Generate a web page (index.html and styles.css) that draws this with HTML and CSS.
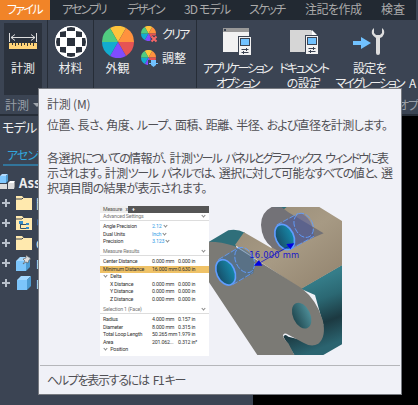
FILE: index.html
```html
<!DOCTYPE html>
<html>
<head>
<meta charset="utf-8">
<title>計測</title>
<link rel="stylesheet" href="styles.css">
</head>
<body>
<svg width="0" height="0" class="defs">
  <defs>
    <symbol id="wheel" viewBox="-16 -16 32 32">
      <path fill="#ffc33c" d="M0 0L-8-13.9A16 16 0 0 1 8-13.9Z"/>
      <path fill="#ff923e" d="M0 0L8-13.9A16 16 0 0 1 16 0Z"/>
      <path fill="#e65454" d="M0 0H16A16 16 0 0 1 8 13.9Z"/>
      <path fill="#804cff" d="M0 0L8 13.9A16 16 0 0 1-8 13.9Z"/>
      <path fill="#12acd0" d="M0 0L-8 13.9A16 16 0 0 1-16 0Z"/>
      <path fill="#50cc80" d="M0 0H-16A16 16 0 0 1-8-13.9Z"/>
    </symbol>
    <symbol id="folder" viewBox="0 0 16 14"><path fill="#ffe9ae" d="M0 0h6l2 2h8v12H0z"/><path d="M0 3h6l1.500-1.500" fill="none" stroke="#3b4453"/></symbol>
    <symbol id="cube" viewBox="0 0 14 14"><path fill="#7cc5fb" d="M0 4H10V14H0z"/><path fill="#a3d8ff" d="M0 4L4 0H14L10 4z"/><path fill="#4c9bd2" d="M10 4L14 0V10L10 14z"/></symbol>
    <symbol id="sheet" viewBox="0 0 14 20"><path fill="#3b4453" d="M0 0h14v20H0z"/><path fill="#f2f2f2" d="M1 1h12v18H1z"/><path fill="#3b4453" d="M2 2h10v8H2z"/><path fill="#71c2ff" d="M3 3h8v6H3z"/><path d="M3.500 13.500h7M3.500 16.500h7M8.500 12v3M5.500 15v3" stroke="#3b4453"/></symbol>
  </defs>
</svg>
<nav class="tabs">
  <span class="tab file">ファイル</span>
  <span class="tab assy">アセンブリ</span>
  <span class="tab design">デザイン</span>
  <span class="tab model">3D モデル</span>
  <span class="tab sketch">スケッチ</span>
  <span class="tab note">注記を作成</span>
  <span class="tab check">検査</span>
</nav>
<section class="ribbon">
  <div class="tool pressed">
    <svg class="icon" width="30" height="32" viewBox="0 0 30 32"><path d="M1.500 7v9M28.500 7v9M3 11.500h24M7 8.500l-4 3 4 3M23 8.500l4 3-4 3" fill="none" stroke="#ddd"/><path fill="#ffd479" d="M1 17h28v6H1z"/><path d="M4.500 17v2M7.500 17v3M10.500 17v2M13.500 17v3M16.500 17v2M19.500 17v3M22.500 17v2M25.500 17v3" stroke="#3b3a35"/></svg>
    <span class="label">計測</span>
  </div>
  <div class="tool material">
    <svg class="icon" width="32" height="32" viewBox="-16 -16 32 32"><circle r="16" fill="#fff"/><g fill="#2b323d"><path d="M-4-4h8v8h-8zM-4-15h8v4h-8zM-4 11h8v4h-8zM-15-4h4v8h-4zM11-4h4v8h-4zM-11-10l6-1v6h-6zM5-11l6 1v5H5zM-11 5h6v6l-6-1zM5 5h6v5l-6 1z"/></g><circle r="15.500" fill="none" stroke="#fff"/></svg>
    <span class="label">材料</span>
  </div>
  <div class="tool look">
    <svg class="icon" width="32" height="32"><use href="#wheel"/></svg>
    <span class="label">外観</span>
  </div>
  <div class="small-tools">
    <div class="small"><svg width="17" height="18" viewBox="0 0 17 18"><use href="#wheel" width="15" height="15" y="1"/><path d="M10.500 11.500l5 5m0-5l-5 5" stroke="#3b4453" stroke-width="4"/><path d="M10.500 11.500l5 5m0-5l-5 5" stroke="#fa6666" stroke-width="2"/></svg><span class="clear">クリア</span></div>
    <div class="small"><svg width="17" height="18" viewBox="0 0 17 18"><use href="#wheel" width="15" height="15" y="1"/><path fill="#3b4453" d="M7 11h10v7H7z"/><path fill="#71c2ff" d="M10 11h5v5l-2.500 2L10 16z"/><path d="M8 14.500h9" stroke="#71c2ff"/></svg><span>調整</span></div>
  </div>
  <div class="tool option">
    <svg class="icon" width="30" height="32" viewBox="0 0 30 32"><path fill="#f2f2f2" d="M1 2h26v24H1z"/><path fill="#999" d="M1 2h26v4H1z"/><path fill="#3b4453" d="M2 3h2v2H2z"/><use href="#sheet" x="16" y="10" width="14" height="20"/></svg>
    <span class="label app">アプリケーション</span><span class="label app2">オプション</span>
  </div>
  <div class="tool document">
    <svg class="icon" width="30" height="32" viewBox="0 0 30 32"><path fill="#d6d6d6" d="M1 4h21l5 5v17H1z"/><path fill="#fff" d="M23 4l5 5h-5z"/><use href="#sheet" x="16" y="9" width="14" height="20"/></svg>
    <span class="label doc">ドキュメント</span><span class="label doc2">の設定</span>
  </div>
  <div class="tool migrate">
    <svg class="icon" width="34" height="32" viewBox="0 0 34 32"><path fill="#71c2ff" d="M0 15h8v-4l10 6-10 6v-4H0z"/><path fill="#ddd" d="M21 2q-3 2-2 6 1 2 4 4v15q0 2 2 2t2-2V12q3-1 4-4 1-4-2-6v5l-2 2h-4l-2-2z"/></svg>
    <span class="label set">設定を</span><span class="label mig">マイグレーション</span>
  </div>
  <span class="cut">A</span>
</section>
<div class="captions"><span>計測</span><i class="arrow"></i><span class="opt">オプ</span></div>
<main class="work">
  <aside class="browser">
    <div class="title">モデル</div>
    <div class="subtab">アセンブリ</div>
    <div class="root"><svg width="16" height="16" viewBox="0 0 16 16"><path fill="#81c9ff" d="M0 2h6v7H0z"/><path fill="#b3dcff" d="M0 2l2-2h6L6 2z"/><path fill="#509bd0" d="M6 2l2-2v7L6 9z"/><path fill="#ddd" d="M0 10h7v5H0zM8 9h6v6H8z"/><path fill="#fff" d="M8 9l2-2h5l-1 2z"/><path fill="#999" d="M14 9l1-2v6l-1 2z"/></svg><b>Ass</b></div>
    <ul class="tree">
      <li><i class="plus"></i><svg width="16" height="14"><use href="#folder"/></svg><span>関</span></li>
      <li><i class="plus"></i><svg width="16" height="14" viewBox="0 0 16 14"><use href="#folder"/><path d="M4.500 7v5.500H11M5 8.500h6" fill="none" stroke="#37546a"/><path fill="#348bc9" d="M3 5h4v3H3zM10 7h3v2h-3zM10 11h3v2h-3z"/></svg><span>リ</span></li>
      <li><i class="plus"></i><svg width="16" height="14"><use href="#folder"/></svg><span>O</span></li>
      <li><i class="plus"></i><svg width="16" height="16" viewBox="0 0 16 16"><use href="#cube" y="2" width="14" height="14"/><path fill="#ddd" stroke="#555" stroke-width=".6" d="M10 0l5 4-2 1-1 3-2-1-3 2 2-3-2-2 3-1z"/></svg><span>P</span></li>
      <li><i class="plus"></i><svg width="16" height="14"><use href="#cube" x="1" width="14" height="14"/></svg><span>P</span></li>
    </ul>
  </aside>
</main>
<article class="tooltip">
  <h1>計測 (M)</h1>
  <p class="l1">位置<i>、</i>長<span>さ</span><i>、</i>角度<i>、</i><span>ループ</span><i>、</i>面積<i>、</i>距離<i>、</i>半径<i>、</i><span>および</span>直径<span>を</span>計測<span>します。</span></p>
  <div class="detail">
    <p class="l2">各選択<span>についての</span>情報<span>が</span><i>、</i>計測<span>ツール</span> <span>パネルとグラフィックス</span> <span>ウィンドウに</span>表</p>
    <p class="l3">示<span>されます</span><i>。</i>計測<span>ツール</span> <span>パネルでは</span><i>、</i>選択<span>に</span>対<span>して</span>可能<span>なすべての</span>値<span>と</span><i>、</i>選</p>
    <p class="l4">択項目間の結果が表示されます。</p>
  </div>
  <div class="figure" lang="en">
    <div class="measure">
      <div class="mtab"><span>Measure &nbsp; x</span><b>+</b></div>
      <div class="head">Advanced Settings<i></i></div>
      <div class="rows">
        <div class="blue"><span>Angle Precision</span><em>2.12 <i></i></em></div>
        <div class="blue"><span>Dual Units</span><em>Inch <i></i></em></div>
        <div class="blue"><span>Precision</span><em>3.123 <i></i></em></div>
      </div>
      <div class="head">Measure Results<i></i></div>
      <div class="rows">
        <div><span>Center Distance</span><em>0.000 mm</em><em>0.000 in</em></div>
        <div class="hot"><span>Minimum Distance</span><em>16.000 mm</em><em>0.630 in</em></div>
        <div><span><i></i> &nbsp;Delta</span></div>
        <div><span class="in">X Distance</span><em>0.000 mm</em><em>0.000 in</em></div>
        <div><span class="in">Y Distance</span><em>0.000 mm</em><em>0.000 in</em></div>
        <div><span class="in">Z Distance</span><em>0.000 mm</em><em>0.000 in</em></div>
      </div>
      <div class="head">Selection 1 (Face)<i></i></div>
      <div class="rows">
        <div><span>Radius</span><em>4.000 mm</em><em>0.157 in</em></div>
        <div><span>Diameter</span><em>8.000 mm</em><em>0.315 in</em></div>
        <div><span>Total Loop Length</span><em>50.265 mm</em><em>1.979 in</em></div>
        <div><span>Area</span><em>201.062...</em><em>0.312 in²</em></div>
        <div><span><i></i> &nbsp;Position</span></div>
      </div>
    </div>
    <svg class="part" width="133" height="148" viewBox="12 36 399 444">
      <defs>
        <linearGradient id="side" gradientUnits="userSpaceOnUse" x1="330" y1="255" x2="400" y2="440"><stop offset="0" stop-color="#357d89"/><stop offset=".3" stop-color="#2b6873"/><stop offset=".65" stop-color="#1c3941"/><stop offset="1" stop-color="#2b6470"/></linearGradient>
        <linearGradient id="bore"><stop offset="0" stop-color="#174d68"/><stop offset="1" stop-color="#168aaa"/></linearGradient>
        <linearGradient id="hole"><stop offset="0" stop-color="#214951"/><stop offset="1" stop-color="#4c8c96"/></linearGradient>
        <linearGradient id="tan" x1="0" y1="0" x2="1" y2="1"><stop offset="0" stop-color="#958975"/><stop offset=".5" stop-color="#a79a84"/><stop offset="1" stop-color="#91826d"/></linearGradient>
      </defs>
      <path fill="#2f6f7a" d="M12 140L70 106Q95 100 120 113L90 160 40 180 12 150zM200 36H250L230 55z"/>
      <path fill="url(#side)" d="M411 210V448L355 480H268L235 425Q240 415 250 425L330 445 355 390 330 300 287 281z"/>
      <path fill="url(#tan)" d="M117 112L200 160 190 80 245 36H343L411 78V211L288 282 90 150z"/>
      <path fill="#737277" d="M200 36Q168 52 168 90 170 135 202 158L225 170 356 115 250 52 230 37z"/>
      <path fill="#7b7a75" d="M12 140Q50 140 88 153L290 280Q335 315 353 375 365 425 340 446 320 458 295 443L250 419Q234 410 234 425 240 435 250 445L268 480H157L12 262z"/>
      <ellipse cx="290" cy="362" rx="26" ry="41" transform="rotate(-25 290 362)" fill="url(#hole)"/>
      <path fill="#37689780" d="M40 195L102 157Q140 165 150 205L145 235 82 269z"/>
      <path fill="#4653a280" d="M218 90L285 55Q322 65 327 125L255 164z"/>
      <ellipse cx="62" cy="232" rx="27" ry="40" transform="rotate(-25 62 232)" fill="url(#bore)" stroke="#609dff" stroke-width="5"/>
      <ellipse cx="239" cy="126" rx="27" ry="40" transform="rotate(-25 239 126)" fill="url(#bore)" stroke="#609dff" stroke-width="5"/>
      <g fill="none" stroke="#609dff" stroke-width="2.500" stroke-dasharray="17 5"><ellipse cx="119" cy="195" rx="27" ry="40" transform="rotate(-25 119 195)"/><ellipse cx="296" cy="91" rx="27" ry="38" transform="rotate(-25 296 91)"/><path d="M40 194L102 157M83 269L143 233M215 90L280 55M257 163L327 124"/></g>
      <path d="M160 206L260 149" stroke="#0000d8" stroke-width="2"/><path fill="#0000e4" d="M147 212L162 195 172 212zM268 145L244 147 256 163z"/>
      <text x="133" y="188" textLength="149" class="dimension">16.000 mm</text>
    </svg>
  </div>
  <footer>ヘルプを表示するには<i></i>F1 キー</footer>
</article>
</body>
</html>
```

FILE: styles.css
```css
* { box-sizing: border-box; }
body {
  margin: 0; width: 418px; height: 405px; overflow: hidden; position: relative;
  background: #3b4453; color: #eee;
  font: 12px/15px "Noto Sans CJK JP", sans-serif;
  font-feature-settings: "palt"; white-space: nowrap;
}
svg { display: block; flex: none; }
.defs { position: absolute; }
p, h1, ul { margin: 0; padding: 0; font-weight: 400; }

.tabs { display: flex; height: 20px; width: 416px; background: #222932; color: #aaa; line-height: 18px; }
.tab { flex: none; }
.file { width: 50px; padding-left: 7px; background: #f18428; color: #fff; letter-spacing: -1.7px; }
.assy { width: 77px; padding-left: 12px; letter-spacing: -1.8px; }
.design { width: 57px; letter-spacing: -1.8px; }
.model { width: 65px; letter-spacing: -.9px; }
.sketch { width: 55px; letter-spacing: -1.8px; }
.note { width: 77px; padding-left: 1px; letter-spacing: -.5px; }

.ribbon { display: flex; height: 75px; overflow: hidden; }
.tool { flex: none; display: flex; flex-direction: column; align-items: center; padding-top: 6px; }
.icon { margin-bottom: 2px; }
.label { display: block; line-height: 15px; }
.pressed { width: 38px; margin: 3px 5px 0 4px; padding-top: 3px; background: #2b323d; }
.material { width: 46px; border-left: 1px solid #262d37; }
.look { width: 48px; border-left: 1px solid #262d37; }
.small-tools { width: 56px; border-right: 1px solid #262d37; padding-top: 5px; }
.small { display: flex; gap: 4px; height: 24px; line-height: 18px; }
.clear { letter-spacing: -1.7px; }
.option { width: 80px; }
.document { width: 53px; }
.migrate { width: 79px; }
.app { letter-spacing: -2.200px; }
.app2, .doc, .mig { letter-spacing: -2.100px; }
.doc2, .set { letter-spacing: -.7px; }
.cut { margin-top: 55px; }

.captions { display: flex; align-items: center; height: 21px; padding-left: 5px; color: #999fa8; border-bottom: 2px solid #262d37; }
.arrow { margin-left: 4px; border: 4px solid transparent; border-top-color: #a0a6ae; border-bottom: 0; }
.opt { margin-left: auto; letter-spacing: -1px; }

.work { height: 289px; background: #000; }
.browser { width: 253px; height: 100%; background: #3b4453; overflow: hidden; }
.title { height: 29px; padding: 3px 0 0 2px; font-size: 13px; letter-spacing: -.7px; }
.subtab { margin-left: 3px; height: 21px; padding: 2px 0 0 4px; border-bottom: 2px solid #32759b; color: #32a5dc; letter-spacing: -1px; }
.root { display: flex; gap: 3px; height: 27px; padding-top: 8px; font-size: 13px; line-height: 18px; }
.tree { list-style: none; }
.tree li { display: flex; align-items: center; height: 20px; padding-left: 1px; gap: 5px; }
.plus { width: 10px; height: 9px; background: linear-gradient(#b8c0ca, #b8c0ca) center / 8px 2px no-repeat, linear-gradient(#b8c0ca, #b8c0ca) center / 2px 8px no-repeat; }
.tree span { margin-left: -1px; }

.tooltip { position: absolute; left: 38px; top: 88px; width: 364px; height: 307px; padding: 6px 1px 0 8px; background: #f0f1f7; border: 1px solid #777a80; color: #505055; letter-spacing: -.5px; }
.tooltip h1 { font-size: 12px; height: 22px; line-height: 18px; letter-spacing: -.2px; }
.tooltip p { word-spacing: 2px; }
.tooltip p i { margin-right: 2px; font-style: normal; }
.l1 { height: 33px; }
.l1 span { letter-spacing: -.9px; }
.l3 span { letter-spacing: -1.500px; }
.l2 span { letter-spacing: -1.800px; }
.l4 { letter-spacing: -.6px; }
.detail { height: 55px; }
.figure { display: flex; align-items: flex-end; width: 296px; height: 151px; margin: 0 0 0 53px; font-feature-settings: normal; }
.measure { width: 109px; height: 150px; background: #fff; font: 5.300px/7.600px Roboto, sans-serif; letter-spacing: -.2px; color: #333; }
.mtab { height: 7px; background: #555; color: #fff; display: flex; gap: 4px; line-height: 7px; }
.mtab span { width: 28px; padding-left: 3px; background: #eee; color: #555; }
.head { height: 8px; padding: 0 3px; border-bottom: .5px solid #ddd; color: #777; display: flex; justify-content: space-between; }
.rows { padding: 2px 0 2.300px; }
.rows > div { display: grid; grid-template-columns: 49px 26px 31px; padding-left: 3px; height: 7.600px; }
.rows em { font-style: normal; }
.rows .blue em { color: #319be7; }
.rows .hot { background: #efc267; }
.measure i { display: inline-block; width: 3px; height: 3px; margin: 1px; border: solid #888; border-width: 0 .5px .5px 0; transform: rotate(45deg); }
.in { padding-left: 7px; }
.part { margin-bottom: 1px; }
.dimension { font: 25px "DejaVu Sans", sans-serif; fill: #1616c9; }
.tooltip footer { margin: 9px 0 0 -7px; padding: 5px 0 0 7px; border-top: 1px solid #b5b6ba; letter-spacing: -1.300px; line-height: 17px; }
footer i { margin-left: 4px; }
```
